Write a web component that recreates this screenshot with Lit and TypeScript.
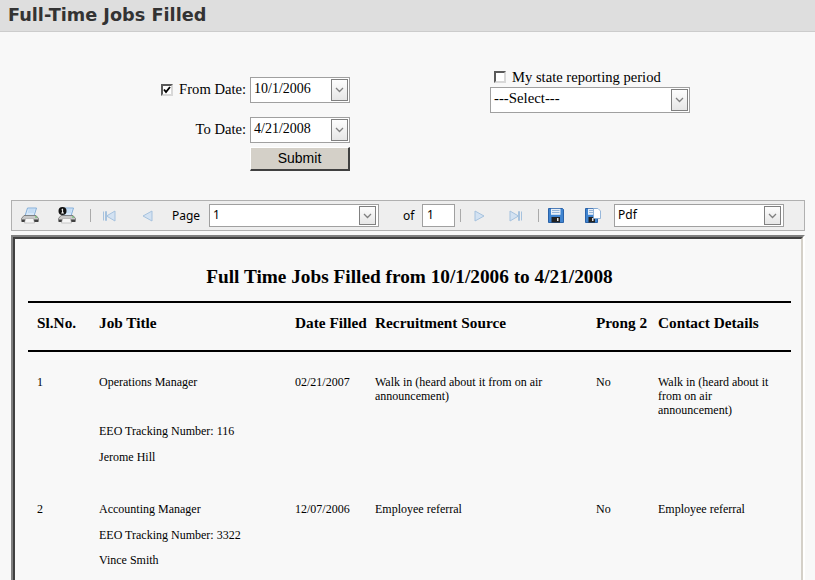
import { LitElement, html, css, svg } from "lit";
import { customElement } from "lit/decorators.js";

const chevron = html`<span class="arrow"><svg width="9" height="6" viewBox="0 0 9 6"><path d="M1 1l3.5 3.5L8 1" fill="none" stroke="#808080" stroke-width="1.3"/></svg></span>`;

const printer = (badge: boolean) => html`<svg width="18" height="17" viewBox="0 0 18 17">
  <path d="M6.500 1h9l-2.500 8H4z" fill="#d6e8fa" stroke="#7aa8d6" stroke-width=".9"/>
  <path d="M7.500 3h6M7 5h6" stroke="#a4c6e8" stroke-width=".7"/>
  <path d="M3 8.500h12l2.500 3v3h-17v-3z" fill="#c8c8c8" stroke="#707070" stroke-width=".8"/>
  <path d="M1 12.500h16v2.500H1z" fill="#404040"/>
  <path d="M4.500 11.500h8l1 4.500h-10z" fill="#f6f6f6" stroke="#999" stroke-width=".5"/>
  <path d="M14 10h2" stroke="#5cc05c" stroke-width="1"/>
  ${badge ? svg`<circle cx="4.500" cy="4" r="4" fill="#111"/><path d="M3.500 2.800l1.100-.8v4M3.300 6h2.600" stroke="#fff" stroke-width="1" fill="none"/>` : ""}
</svg>`;

const nav = (d: string) => html`<svg width="14" height="12" viewBox="0 0 14 12"><path d=${d} fill="#d3e2f2" stroke="#a6c2de" stroke-width="1" stroke-linejoin="round"/></svg>`;

const disk = (multi: boolean) => html`<svg width="16" height="15" viewBox="0 0 16 15">
  <path d="M.5.5h${multi ? 11 : 14}l1 1v13H.5z" fill="#3f84d0" stroke="#2a62a8"/>
  <path d="M3 .8h${multi ? 6.500 : 9.500}v6H3z" fill="#e8eff7"/>
  <path d="M4 2.500h${multi ? 4.500 : 7.500}M4 4.500h${multi ? 4.500 : 7.500}" stroke="#7fa6d0" stroke-width=".8"/>
  <path d="M3.500 9h${multi ? 6.500 : 8.500}v5.500H3.500z" fill="#222"/>
  <path d="M${multi ? 7 : 9} 10h1.500v3H${multi ? 7 : 9}z" fill="#ddd"/>
  ${multi ? svg`<path d="M8.500.5h4.500l2.500 2.500v7.500h-7z" fill="#fff" stroke="#7ea6d2" stroke-width=".8"/>` : ""}
</svg>`;

const ROWS = [
  { no: "1", title: ["Operations Manager", "EEO Tracking Number: 116", "Jerome Hill"], date: "02/21/2007",
    source: "Walk in (heard about it from on air announcement)", prong: "No",
    contact: "Walk in (heard about it from on air announcement)", tall: true },
  { no: "2", title: ["Accounting Manager", "EEO Tracking Number: 3322", "Vince Smith"], date: "12/07/2006",
    source: "Employee referral", prong: "No", contact: "Employee referral", tall: false },
];

@customElement("app-root")
export class AppRoot extends LitElement {
  static styles = css`
    :host { display: block; width: 815px; height: 580px; overflow: hidden; background: #f8f8f8; font-family: "Liberation Serif", serif; color: #000; }
    .head { height: 31px; background: #dedede; border-bottom: 1px solid #ccc; padding-left: 8px; }
    .head h1 { margin: 0; font: bold 17.7px/31px "DejaVu Sans", sans-serif; color: #333; }
    .form { height: 168px; display: flex; box-sizing: border-box; }
    .left { width: 350px; padding-top: 45px; display: grid; grid-template-columns: 246px 100px; column-gap: 4px; row-gap: 14px; grid-auto-rows: min-content; align-content: start; }
    .lbl { display: flex; justify-content: flex-end; align-items: center; gap: 6px; font-size: 14.6px; height: 25px; margin-bottom: 1px; }
    .combo { display: flex; height: 26px; box-sizing: border-box; border: 1px solid #a0a0a0; background: #fff; padding: 1px 1px 1px 3px; font-size: 14px; line-height: 19px; justify-content: space-between; }
    .combo.sel { font-size: 14.8px; }
    .arrow { width: 17px; height: 22px; flex: none; box-sizing: border-box; border: 1px solid #808080; background: linear-gradient(#fdfdfd, #e6e6e6); display: flex; align-items: center; justify-content: center; }
    .submit { grid-column: 2; margin-top: -10px; height: 24px; box-sizing: border-box; background: #d4d0c8; border: 1px solid; border-color: #fff #404040 #404040 #fff; border-width: 1px 2px 2px 1px; font: 14px/19px "Liberation Sans", sans-serif; text-align: center; padding: 0; color: #000; }
    .cb { width: 12px; height: 12px; box-sizing: border-box; background: #fff; border: 2px solid; border-color: #5a5a5a #d8d8d8 #d8d8d8 #5a5a5a; display: inline-flex; align-items: center; justify-content: center; flex: none; }
    .right { margin-left: 140px; width: 200px; padding-top: 36px; display: flex; flex-direction: column; gap: 1px; }
    .state { display: flex; align-items: center; gap: 6px; padding-left: 4px; font-size: 14.6px; height: 18px; }
    .toolbar { margin: 0 10px 0 11px; height: 31px; box-sizing: border-box; background: #eee; border: 1px solid #b0b0b0; display: flex; align-items: center; font: 12px "Noto Sans", sans-serif; }
    .toolbar .combo { height: 23px; font: 12px/18px "Noto Sans", sans-serif; padding-left: 3px; }
    .toolbar .arrow { height: 19px; margin-right: 1px; }
    .ic { display: flex; flex: none; align-items: center; justify-content: center; }
    .sep { width: 1px; height: 13px; background: #aaa; flex: none; }
    .num { width: 33px; height: 23px; box-sizing: border-box; border: 1px solid #a0a0a0; background: #fff; padding: 1px 0 0 4px; line-height: 17px; flex: none; }
    .w36 { width: 36px; } .w38 { width: 38px; } .w34 { width: 34px; } .w40 { width: 40px; }
    .s1 { margin-left: 4px; } .s2 { margin-left: 2px; } .s3 { margin-left: 5px; } .s4 { margin-left: 1px; }
    .page { margin-left: 7px; width: 37px; flex: none; }
    .of { margin-left: 24px; width: 19px; flex: none; }
    .cp { width: 170px; flex: none; }
    .cf { width: 170px; flex: none; margin-left: 1px; }
    .report { margin: 4px 10px 0 11px; height: 400px; box-sizing: border-box; border: solid; border-width: 2px 2px 0 2px; border-color: #808080 #fff #fff #808080; background: #f8f8f8; }
    .inner { height: 100%; box-sizing: border-box; border: solid; border-width: 2px 2px 0 2px; border-color: #404040 #d4d0c8 #d4d0c8 #404040; padding: 0 10px 0 13px; }
    .rtitle { margin: 0; padding-top: 26px; height: 62px; box-sizing: border-box; text-align: center; font: bold 19.3px/24px "Liberation Serif", serif; white-space: nowrap; }
    .table { display: grid; grid-template-columns: 62px 204px 80px 221px 62px 134px; }
    .hrow { display: contents; }
    .hrow > div { border-top: 2px solid #000; border-bottom: 2px solid #000; height: 51px; box-sizing: border-box; padding: 11px 0 0 9px; font: bold 15.3px/18px "Liberation Serif", serif; white-space: nowrap; }
    .hrow > div:nth-child(n+3) { padding-left: 1px; }
    .rowc { display: contents; }
    .cell { font-size: 12px; line-height: 14px; padding: 23px 8px 0 9px; }
    .cell:nth-child(n+3) { padding-left: 1px; }
    .cell:nth-child(4) { padding-right: 20px; }
    .cell:nth-child(6) { padding-right: 18px; }
    .title p { margin: 0; white-space: nowrap; }
    .t0 { height: 127px; box-sizing: border-box; }
    .title p:nth-child(2) { margin-top: 12px; }
    .title p:nth-child(3) { margin-top: 11px; }
    .title.t0 p:nth-child(2) { margin-top: 35px; }
    .title.t0 p:nth-child(3) { margin-top: 12px; }
  `;

  render() {
    return html`
      <div class="head"><h1>Full-Time Jobs Filled</h1></div>
      <div class="form">
        <div class="left">
          <div class="lbl"><span class="cb"><svg width="8" height="8" viewBox="0 0 8 8"><path d="M1 3.500l2 2.500 4-5" fill="none" stroke="#000" stroke-width="1.900"/></svg></span><span>From Date:</span></div>
          <div class="combo"><span>10/1/2006</span>${chevron}</div>
          <div class="lbl"><span>To Date:</span></div>
          <div class="combo"><span>4/21/2008</span>${chevron}</div>
          <button class="submit">Submit</button>
        </div>
        <div class="right">
          <div class="state"><span class="cb"></span><span>My state reporting period</span></div>
          <div class="combo sel"><span>---Select---</span>${chevron}</div>
        </div>
      </div>
      <div class="toolbar">
        <span class="ic w36">${printer(false)}</span>
        <span class="ic w38">${printer(true)}</span>
        <span class="sep s1"></span>
        <span class="ic w36">${nav("M1.500 1.500v9M3.500 1.500h1v9h-1zM4.500 6l8.500-5v10z")}</span>
        <span class="ic w36 s2">${nav("M3 6l9-5v10z")}</span>
        <span class="page">Page</span>
        <div class="combo cp"><span>1</span>${chevron}</div>
        <span class="of">of</span>
        <div class="num">1</div>
        <span class="sep s3"></span>
        <span class="ic w36 s4">${nav("M11 6l-9-5v10z")}</span>
        <span class="ic w36">${nav("M12.500 1.500v9M9.500 1.500h1v9h-1zM9.500 6l-8.500-5v10z")}</span>
        <span class="sep s1"></span>
        <span class="ic w34">${disk(false)}</span>
        <span class="ic w40">${disk(true)}</span>
        <div class="combo cf"><span>Pdf</span>${chevron}</div>
      </div>
      <div class="report"><div class="inner">
        <p class="rtitle">Full Time Jobs Filled from 10/1/2006 to 4/21/2008</p>
        <div class="table">
          <div class="hrow"><div>Sl.No.</div><div>Job Title</div><div>Date Filled</div><div>Recruitment Source</div><div>Prong 2</div><div>Contact Details</div></div>
          ${ROWS.map((r) => html`<div class="rowc">
            <div class="cell ${r.tall ? "t0" : ""}">${r.no}</div>
            <div class="cell title ${r.tall ? "t0" : ""}">${r.title.map((t) => html`<p>${t}</p>`)}</div>
            <div class="cell ${r.tall ? "t0" : ""}">${r.date}</div>
            <div class="cell ${r.tall ? "t0" : ""}">${r.source}</div>
            <div class="cell ${r.tall ? "t0" : ""}">${r.prong}</div>
            <div class="cell ${r.tall ? "t0" : ""}">${r.contact}</div>
          </div>`)}
        </div>
      </div></div>
    `;
  }
}
